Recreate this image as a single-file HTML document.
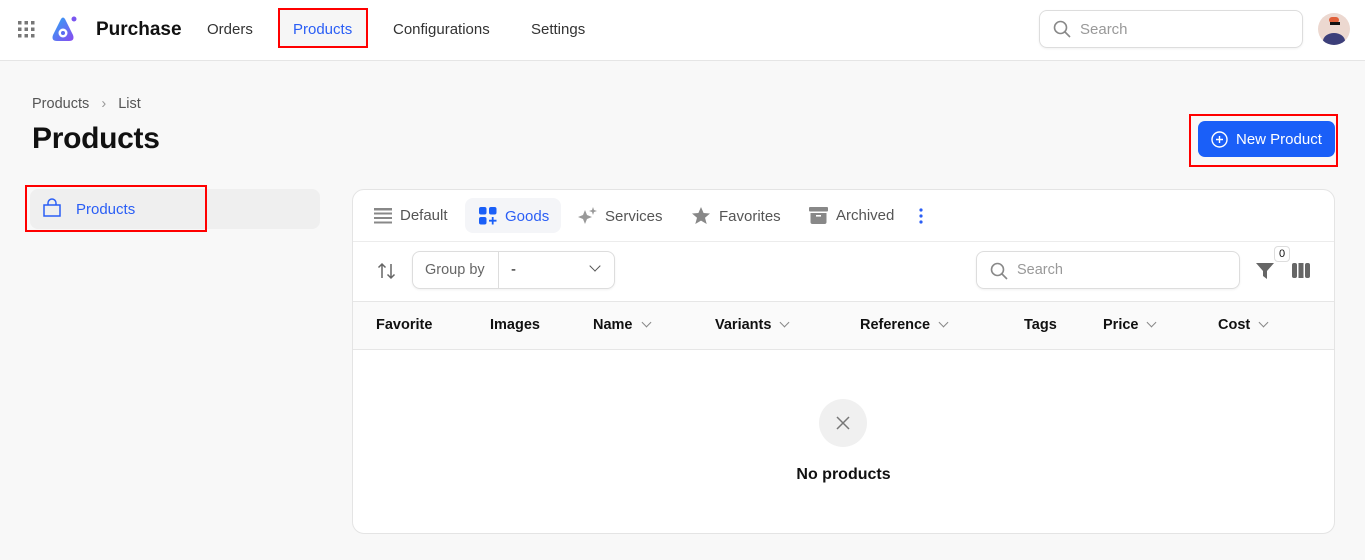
<!DOCTYPE html>
<html><head><meta charset="utf-8"><style>
*{box-sizing:border-box;margin:0;padding:0}
body{width:1365px;height:560px;background:#f8f8f8;font-family:"Liberation Sans",sans-serif;color:#111;position:relative;overflow:hidden;font-size:15px}
.abs{position:absolute}
.top{position:absolute;left:0;top:0;width:1365px;height:61px;background:#fff;border-bottom:1px solid #e5e5e5}
.nav{position:absolute;top:21px;font-size:15px;color:#333}
.red{position:absolute;border:2px solid #f00}
.card{position:absolute;left:352px;top:189px;width:983px;height:345px;background:#fff;border:1px solid #e4e4e4;border-radius:12px;overflow:hidden}
.tab{position:absolute;top:17px;font-size:15px;color:#555;display:flex;align-items:center;gap:8px}
.th{position:absolute;top:127px;font-size:14.5px;font-weight:bold;color:#111}
.chev{display:inline-block;width:7px;height:7px;border-right:1.5px solid #888;border-bottom:1.5px solid #888;transform:rotate(45deg);margin-left:10px;position:relative;top:-3px}
</style></head><body>
<div class="top">
  <svg class="abs" style="left:18px;top:21px" width="17" height="17"><g fill="#777"><rect x="0" y="0" width="3.5" height="3.5"/><rect x="6.5" y="0" width="3.5" height="3.5"/><rect x="13" y="0" width="3.5" height="3.5"/><rect x="0" y="6.5" width="3.5" height="3.5"/><rect x="6.5" y="6.5" width="3.5" height="3.5"/><rect x="13" y="6.5" width="3.5" height="3.5"/><rect x="0" y="13" width="3.5" height="3.5"/><rect x="6.5" y="13" width="3.5" height="3.5"/><rect x="13" y="13" width="3.5" height="3.5"/></g></svg>
  <svg class="abs" style="left:51px;top:15px" width="28" height="28" viewBox="0 0 28 28"><defs><linearGradient id="g" x1="0" y1="0" x2="1" y2="1"><stop offset="0" stop-color="#2aa8f5"/><stop offset="1" stop-color="#8a4bf0"/></linearGradient></defs><path d="M10 4 Q12 1 14 4 L22 20 Q24 26 18 26 L6 26 Q0 26 2 20 Z" fill="url(#g)"/><circle cx="12" cy="18" r="4.5" fill="#fff"/><circle cx="12" cy="18" r="2" fill="#5a6cf0"/><circle cx="23" cy="4" r="2.5" fill="#7a55f0"/></svg>
  <div class="abs" style="left:96px;top:19px;font-size:19px;font-weight:bold">Purchase</div>
  <div class="nav" style="left:207px">Orders</div>
  <div class="abs" style="left:279px;top:9px;width:88px;height:38px;background:#f6f6f6"></div>
  <div class="nav" style="left:293px;color:#2a5ef5">Products</div>
  <div class="red" style="left:278px;top:8px;width:90px;height:40px"></div>
  <div class="nav" style="left:393px">Configurations</div>
  <div class="nav" style="left:531px">Settings</div>
  <div class="abs" style="left:1039px;top:10px;width:264px;height:38px;border:1px solid #ddd;border-radius:8px;box-shadow:0 1px 2px rgba(0,0,0,.06)"></div>
  <svg class="abs" style="left:1053px;top:20px" width="18" height="18" fill="none" stroke="#888" stroke-width="1.6"><circle cx="7.5" cy="7.5" r="6"/><path d="M12 12 L17 17"/></svg>
  <div class="abs" style="left:1080px;top:21px;color:#999">Search</div>
  <div class="abs" style="left:1318px;top:13px;width:32px;height:32px;border-radius:50%;background:#ecd8d0;overflow:hidden"><div class="abs" style="left:5px;top:20px;width:22px;height:16px;border-radius:50% 50% 0 0;background:#3c3f7a"></div><div class="abs" style="left:11px;top:4px;width:10px;height:6px;background:#e0603a;border-radius:4px"></div><div class="abs" style="left:12px;top:9px;width:10px;height:3px;background:#111"></div></div>
</div>
<div class="abs" style="left:32px;top:96px;font-size:14.5px;color:#555">Products&nbsp;&nbsp;&nbsp;<span style="color:#999">›</span>&nbsp;&nbsp;&nbsp;List</div>
<div class="abs" style="left:32px;top:122px;font-size:30px;font-weight:bold;letter-spacing:-0.3px">Products</div>
<div class="abs" style="left:1198px;top:121px;width:137px;height:36px;background:#1a5ff8;border-radius:7px;color:#fff;font-size:15px;padding:10px 0 0 38px">New Product</div>
<svg class="abs" style="left:1211px;top:131px" width="17" height="17" fill="none" stroke="#fff" stroke-width="1.4"><circle cx="8.5" cy="8.5" r="7.5"/><path d="M8.5 5v7M5 8.5h7"/></svg>
<div class="red" style="left:1189px;top:114px;width:149px;height:53px"></div>
<div class="abs" style="left:30px;top:189px;width:290px;height:40px;background:#efefef;border-radius:8px"></div>
<svg class="abs" style="left:42px;top:198px" width="20" height="20" fill="none" stroke="#2a5ef5" stroke-width="1.5"><path d="M2 7h16v11H2z M6 7V5a4 4 0 0 1 8 0v2"/></svg>
<div class="abs" style="left:76px;top:201px;color:#2a5ef5;font-size:15px">Products</div>
<div class="red" style="left:25px;top:185px;width:182px;height:47px"></div>
<div class="card">
  <div class="abs" style="left:112px;top:8px;width:96px;height:35px;background:#f4f5f8;border-radius:8px"></div>
  <div class="tab" style="left:21px"><svg width="18" height="16"><g fill="#888"><rect y="0" width="18" height="2.5"/><rect y="4.5" width="18" height="2"/><rect y="9" width="18" height="2"/><rect y="13.5" width="18" height="2"/></g></svg>Default</div>
  <div class="tab" style="left:126px;color:#2a5ef5"><svg width="18" height="18"><g fill="#1a5ff8"><rect x="0" y="0" width="7.5" height="7.5" rx="2"/><rect x="10" y="0" width="7.5" height="7.5" rx="2"/><rect x="0" y="10" width="7.5" height="7.5" rx="2"/><path d="M13.7 10v7.5M10 13.7h7.5" stroke="#1a5ff8" stroke-width="1.8"/></g></svg>Goods</div>
  <div class="tab" style="left:224px"><svg width="20" height="18" fill="#999"><path d="M8 3 L10 8 L15 10 L10 12 L8 17 L6 12 L1 10 L6 8Z"/><path d="M16 0 L17 3 L20 4 L17 5 L16 8 L15 5 L12 4 L15 3Z"/></svg>Services</div>
  <div class="tab" style="left:338px"><svg width="20" height="18" fill="#888"><path d="M10 0 L12.6 6 L19 6.5 L14 10.8 L15.7 17 L10 13.6 L4.3 17 L6 10.8 L1 6.5 L7.4 6Z"/></svg>Favorites</div>
  <div class="tab" style="left:456px"><svg width="19" height="17" fill="#888"><rect x="0" y="0" width="19" height="4.5" rx="1"/><path d="M1.5 6h16v9a2 2 0 0 1-2 2h-12a2 2 0 0 1-2-2z"/><rect x="7" y="8" width="5" height="1.6" fill="#fff"/></svg>Archived</div>
  <svg class="abs" style="left:566px;top:18px" width="4" height="16" fill="#2a5ef5"><circle cx="2" cy="2" r="1.6"/><circle cx="2" cy="8" r="1.6"/><circle cx="2" cy="14" r="1.6"/></svg>
  <div class="abs" style="left:0;top:51px;width:983px;border-top:1px solid #ececec"></div>
  <svg class="abs" style="left:24px;top:72px" width="20" height="18" fill="none" stroke="#666" stroke-width="1.5"><path d="M5 16V2M1.5 5.5L5 2l3.5 3.5M14 2v14M10.5 12.5L14 16l3.5-3.5"/></svg>
  <div class="abs" style="left:59px;top:61px;width:203px;height:38px;border:1px solid #ddd;border-radius:8px;box-shadow:0 1px 2px rgba(0,0,0,.06)"><div class="abs" style="left:85px;top:0;height:36px;border-left:1px solid #ddd"></div><div class="abs" style="left:12px;top:10px;color:#666;font-size:14.5px">Group by</div><div class="abs" style="left:98px;top:9px">-</div><div class="abs" style="left:178px;top:10px;width:8px;height:8px;border-right:1.6px solid #555;border-bottom:1.6px solid #555;transform:rotate(45deg)"></div></div>
  <div class="abs" style="left:623px;top:61px;width:264px;height:38px;border:1px solid #ddd;border-radius:8px;box-shadow:0 1px 2px rgba(0,0,0,.06)"></div>
  <svg class="abs" style="left:637px;top:72px" width="18" height="18" fill="none" stroke="#888" stroke-width="1.6"><circle cx="7.5" cy="7.5" r="6"/><path d="M12 12 L17 17"/></svg>
  <div class="abs" style="left:664px;top:72px;color:#999;font-size:14.5px">Search</div>
  <svg class="abs" style="left:903px;top:72px" width="18" height="18" fill="#666"><path d="M0 1h18l-7 8v8l-4-3V9z"/></svg>
  <div class="abs" style="left:921px;top:56px;width:16px;height:16px;border:1px solid #ddd;border-radius:4px;background:#fff;font-size:11px;text-align:center;line-height:14px">0</div>
  <svg class="abs" style="left:939px;top:73px" width="18" height="15" fill="#666"><rect x="0" y="0" width="5" height="15" rx="2"/><rect x="6.5" y="0" width="5" height="15"/><rect x="13" y="0" width="5" height="15" rx="2"/></svg>
  <div class="abs" style="left:0;top:111px;width:983px;height:49px;background:#fafafa;border-top:1px solid #e6e6e6;border-bottom:1px solid #e6e6e6"></div>
  <div class="th" style="left:23px">Favorite</div>
  <div class="th" style="left:137px">Images</div>
  <div class="th" style="left:240px">Name<span class="chev"></span></div>
  <div class="th" style="left:362px">Variants<span class="chev"></span></div>
  <div class="th" style="left:507px">Reference<span class="chev"></span></div>
  <div class="th" style="left:671px">Tags</div>
  <div class="th" style="left:750px">Price<span class="chev"></span></div>
  <div class="th" style="left:865px">Cost<span class="chev"></span></div>
  <div class="abs" style="left:466px;top:209px;width:48px;height:48px;border-radius:50%;background:#f0f0f0"></div>
  <svg class="abs" style="left:483px;top:226px" width="14" height="14" stroke="#777" stroke-width="1.5"><path d="M1 1L13 13M13 1L1 13"/></svg>
  <div class="abs" style="left:0;top:276px;width:981px;text-align:center;font-weight:bold;font-size:16px">No products</div>
</div>
</body></html>
